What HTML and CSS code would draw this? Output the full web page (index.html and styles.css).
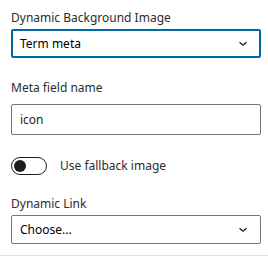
FILE: index.html
```html
<!DOCTYPE html>
<html lang="en">
<head>
    <meta charset="UTF-8">
    <meta name="viewport" content="width=device-width, initial-scale=1.0">
    <link rel="stylesheet" href="styles.css">
</head>
<body>
    <div class="panel">
        <div class="field">
            <label class="field-label">Dynamic Background Image</label>
            <div class="select select-focus">
                <span>Term meta</span>
                <svg class="chevron" width="10" height="6" viewBox="0 0 10 6"><path d="M1.5 1.2l3.5 3 3.5-3" fill="none" stroke="#1e1e1e" stroke-width="1.4"/></svg>
            </div>
        </div>

        <div class="field field-meta">
            <label class="field-label label-meta">Meta field name</label>
            <div class="text-input">icon</div>
        </div>

        <div class="toggle-row">
            <span class="toggle"><span class="toggle-knob"></span></span>
            <span class="toggle-text">Use fallback image</span>
        </div>

        <div class="field field-link">
            <label class="field-label">Dynamic Link</label>
            <div class="select">
                <span>Choose...</span>
                <svg class="chevron" width="10" height="6" viewBox="0 0 10 6"><path d="M1.5 1.2l3.5 3 3.5-3" fill="none" stroke="#1e1e1e" stroke-width="1.4"/></svg>
            </div>
        </div>
    </div>
    <div class="separator"></div>
</body>
</html>
```

FILE: styles.css
```css
body {
    margin: 0;
    background: #fff;
    font-family: "Noto Sans", "Open Sans", sans-serif;
    font-size: 12px;
    color: #1e1e1e;
}
.panel {
    padding: 10px 7px 0 11px;
}
.field-label {
    display: block;
    line-height: 16px;
    color: #2c2c2c;
    margin-bottom: 3px;
}
.select {
    box-sizing: border-box;
    height: 29px;
    border: 1px solid #757575;
    border-radius: 2px;
    display: flex;
    align-items: center;
    justify-content: space-between;
    padding: 0 12px 0 8px;
    color: #000;
}
.select-focus {
    border: 2px solid #006ba1;
    padding-left: 7px;
    padding-right: 11px;
}
.chevron {
    display: block;
}
.field-meta {
    margin-top: 22px;
}
.label-meta {
    margin-bottom: 8px;
}
.text-input {
    box-sizing: border-box;
    height: 31px;
    border: 1px solid #757575;
    border-radius: 2px;
    padding: 0 8px;
    line-height: 29px;
    color: #1e1e1e;
}
.toggle-row {
    display: flex;
    align-items: center;
    margin-top: 22px;
    height: 18px;
}
.toggle {
    box-sizing: border-box;
    width: 36px;
    height: 18px;
    border: 1px solid #1e1e1e;
    border-radius: 9px;
    display: flex;
    align-items: center;
    padding-left: 2px;
}
.toggle-knob {
    width: 12px;
    height: 12px;
    border-radius: 50%;
    background: #1e1e1e;
}
.toggle-text {
    margin-left: 13px;
    line-height: 16px;
    color: #2c2c2c;
}
.field-link {
    margin-top: 21px;
}
.separator {
    margin-top: 11px;
    height: 1px;
    background: #e0e0e0;
}
```
